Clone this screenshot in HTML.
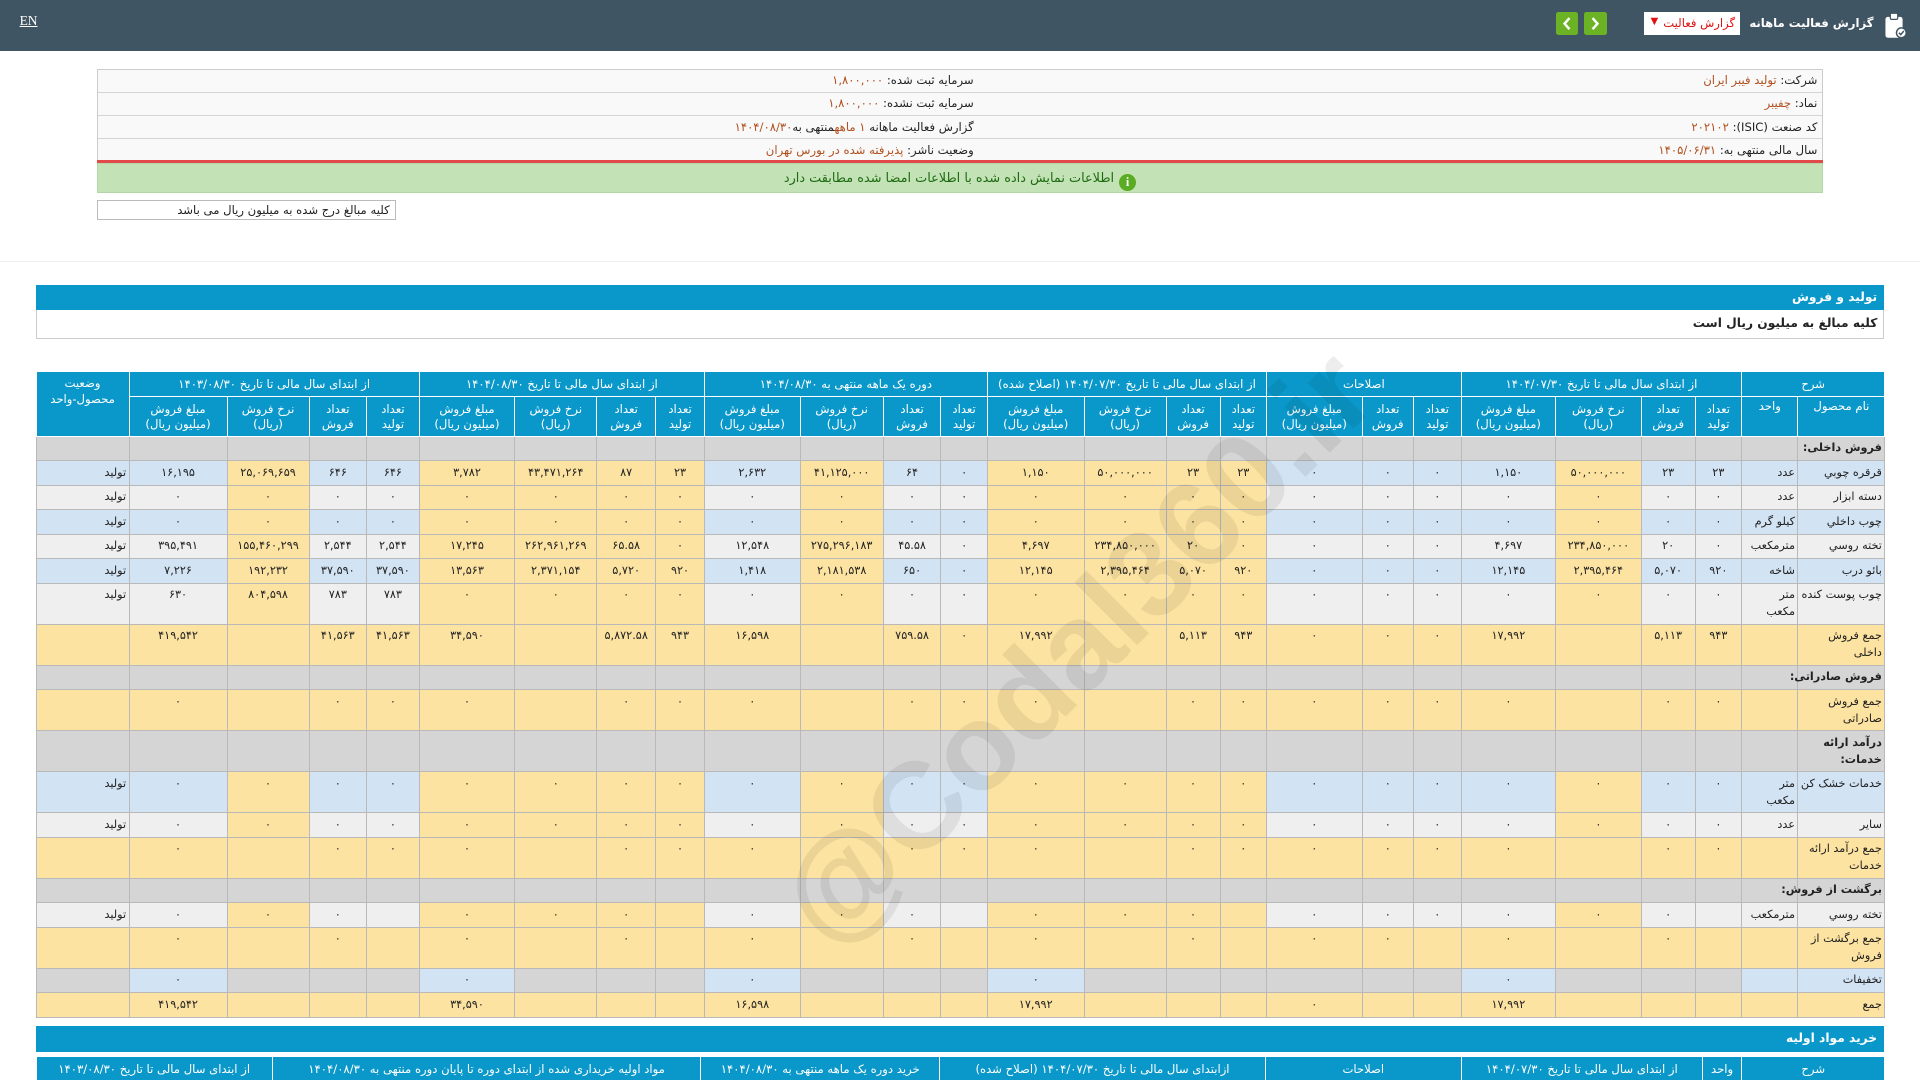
<!DOCTYPE html>
<html lang="fa"><head><meta charset="utf-8">
<style>
html{zoom:1.22449}
*{box-sizing:border-box;margin:0;padding:0}
body{width:1568px;height:882px;overflow:hidden;background:#fff;font-family:"DejaVu Sans",sans-serif;position:relative;color:#222}
.nav{position:absolute;left:0;top:0;width:1568px;height:42px;background:#3f5563}
.en{position:absolute;left:16px;top:11px;color:#fff;font-family:"Liberation Serif",serif;font-size:11px;text-decoration:underline}
.title{position:absolute;right:38px;top:13px;color:#fff;font-weight:bold;font-size:9.5px;direction:rtl;white-space:nowrap}
.clip{position:absolute;right:10px;top:10px}
.sel{position:absolute;left:1343px;top:10px;width:78px;height:19px;background:#fff;color:#e01010;font-size:9.5px;direction:rtl;padding:3px 4px 0 0;white-space:nowrap}
.sel span{position:absolute;left:5px;top:3px;font-size:8px}
.gbtn{position:absolute;top:10px;width:18px;height:19px;background:#6bb324;border-radius:2px}
.info{position:absolute;left:79px;top:56px;width:1410px;border:1px solid #ccc;border-bottom:none;background:#f9f9f9;direction:rtl;font-size:9.5px}
.info div{height:19px;border-bottom:1px solid #d5d5d5;position:relative;padding:3px 4px 0 0}
.info .l{position:absolute;right:693px;top:3px}
.v{color:#b0501e}
.red{position:absolute;left:79px;top:131px;width:1410px;height:2px;background:#e24a4a}
.green{position:absolute;left:79px;top:133px;width:1410px;height:25px;background:#c3e2b6;border:1px solid #b5d6a6;color:#1e6b12;font-size:10.5px;text-align:center;direction:rtl;padding-top:6px}
.green i{display:inline-block;width:14px;height:14px;border-radius:7px;background:#5aac23;color:#fff;font-style:normal;font-size:10px;font-weight:bold;line-height:14px;vertical-align:-3px;margin-left:4px;font-family:"Liberation Serif",serif}
.note{position:absolute;left:79px;top:163px;width:244px;height:17px;border:1px solid #bbb;font-size:9.5px;direction:rtl;padding:2px 4px 0 0}
.hr{position:absolute;left:0;top:213px;width:1568px;height:1px;background:#eee}
.bar{position:absolute;left:29px;width:1510px;background:#0a98ca;color:#fff;font-weight:bold;font-size:10px;direction:rtl;padding:4px 6px 0 0}
.sub{position:absolute;left:29px;top:253px;width:1510px;height:24px;border:1px solid #ccc;border-top:none;font-weight:bold;font-size:10px;direction:rtl;padding:5px 5px 0 0}
table{position:absolute;left:29px;border-collapse:collapse;table-layout:fixed;direction:rtl;font-size:9.2px}
td,th{border:1px solid #b9b9b9;height:20px;padding:2px 3px 0;vertical-align:top;text-align:center;overflow:hidden;white-space:nowrap;line-height:14px}
th{background:#0a98ca;color:#fff;font-weight:normal;border-color:#fff;border-width:1px;vertical-align:middle;line-height:13px;font-size:9.5px}
th.h1{height:19px}
th.h2{height:33px}
td.n{text-align:right;white-space:nowrap;overflow:visible;padding-right:2px}
tr.d td{height:33.5px}
.b{background:#d2e3f4}.g{background:#efefef}.y{background:#fde3a1}.s{background:#d5d5d5}
tr.s td.n{font-weight:bold}
.wm{position:absolute;left:560px;top:470px;transform:rotate(-45deg);font-size:100px;font-weight:bold;color:rgba(0,0,0,0.07);font-family:"Liberation Sans",sans-serif;white-space:nowrap}
</style></head><body>
<div class="nav">
<div class="en">EN</div>
<svg class="clip" width="20" height="22" viewBox="0 0 20 22"><rect x="2" y="4" width="14" height="17" rx="2" fill="#fff"/><rect x="6" y="1" width="6" height="5" rx="1" fill="#fff" stroke="#3f5563" stroke-width="1"/><circle cx="15" cy="17" r="4" fill="#fff" stroke="#3f5563" stroke-width="1.2"/><path d="M13 17l1.5 1.5 2.5-3" stroke="#3f5563" stroke-width="1.2" fill="none"/></svg>
<div class="title">گزارش فعالیت ماهانه</div>
<div class="sel">گزارش فعالیت<span>▼</span></div>
<div class="gbtn" style="left:1271px"><svg width="18" height="19"><path d="M11 5l-4 4.5 4 4.5" stroke="#fff" stroke-width="2" fill="none"/></svg></div>
<div class="gbtn" style="left:1294px"><svg width="18" height="19"><path d="M7 5l4 4.5-4 4.5" stroke="#fff" stroke-width="2" fill="none"/></svg></div>
</div>
<div class="info">
<div>شرکت: <span class="v">تولید فیبر ایران</span><span class="l">سرمایه ثبت شده: <span class="v">۱,۸۰۰,۰۰۰</span></span></div>
<div>نماد: <span class="v">چفیبر</span><span class="l">سرمایه ثبت نشده: <span class="v">۱,۸۰۰,۰۰۰</span></span></div>
<div>کد صنعت (ISIC): <span class="v">۲۰۲۱۰۲</span><span class="l">گزارش فعالیت ماهانه <span class="v">۱ ماهه</span>منتهی به<span class="v">۱۴۰۴/۰۸/۳۰</span></span></div>
<div>سال مالی منتهی به: <span class="v">۱۴۰۵/۰۶/۳۱</span><span class="l">وضعیت ناشر: <span class="v">پذیرفته شده در بورس تهران</span></span></div>
</div>
<div class="red"></div>
<div class="green"><i>i</i>اطلاعات نمایش داده شده با اطلاعات امضا شده مطابقت دارد</div>
<div class="note">کلیه مبالغ درج شده به میلیون ریال می باشد</div>
<div class="hr"></div>
<div class="bar" style="top:233px;height:20px">تولید و فروش</div>
<div class="sub">کلیه مبالغ به میلیون ریال است</div>

<table style="top:303px;width:1510px">
<colgroup><col style="width:71px"><col style="width:46px">
<col style="width:38px"><col style="width:44px"><col style="width:70px"><col style="width:77px">
<col style="width:39px"><col style="width:42px"><col style="width:78px">
<col style="width:38px"><col style="width:44px"><col style="width:67px"><col style="width:79px">
<col style="width:38px"><col style="width:47px"><col style="width:68px"><col style="width:78px">
<col style="width:40px"><col style="width:48px"><col style="width:67px"><col style="width:78px">
<col style="width:43px"><col style="width:47px"><col style="width:67px"><col style="width:80px">
<col style="width:76px"></colgroup>
<tr><th class="h1" colspan="2">شرح</th><th colspan="4">از ابتدای سال مالی تا تاریخ ۱۴۰۴/۰۷/۳۰</th><th colspan="3">اصلاحات</th><th colspan="4">از ابتدای سال مالی تا تاریخ ۱۴۰۴/۰۷/۳۰ (اصلاح شده)</th><th colspan="4">دوره یک ماهه منتهی به ۱۴۰۴/۰۸/۳۰</th><th colspan="4">از ابتدای سال مالی تا تاریخ ۱۴۰۴/۰۸/۳۰</th><th colspan="4">از ابتدای سال مالی تا تاریخ ۱۴۰۳/۰۸/۳۰</th><th rowspan="2" style="vertical-align:top;padding-top:3px">وضعیت<br>محصول-واحد</th></tr>
<tr><th class="h2" style="vertical-align:top">نام محصول</th><th style="vertical-align:top">واحد</th>
<th>تعداد<br>تولید</th><th>تعداد<br>فروش</th><th>نرخ فروش<br>(ریال)</th><th>مبلغ فروش<br>(میلیون ریال)</th>
<th>تعداد<br>تولید</th><th>تعداد<br>فروش</th><th>مبلغ فروش<br>(میلیون ریال)</th>
<th>تعداد<br>تولید</th><th>تعداد<br>فروش</th><th>نرخ فروش<br>(ریال)</th><th>مبلغ فروش<br>(میلیون ریال)</th>
<th>تعداد<br>تولید</th><th>تعداد<br>فروش</th><th>نرخ فروش<br>(ریال)</th><th>مبلغ فروش<br>(میلیون ریال)</th>
<th>تعداد<br>تولید</th><th>تعداد<br>فروش</th><th>نرخ فروش<br>(ریال)</th><th>مبلغ فروش<br>(میلیون ریال)</th>
<th>تعداد<br>تولید</th><th>تعداد<br>فروش</th><th>نرخ فروش<br>(ریال)</th><th>مبلغ فروش<br>(میلیون ریال)</th></tr>

<tr class="s"><td class="n s">فروش داخلی:</td><td class="s"></td><td class="s"></td><td class="s"></td><td class="s"></td><td class="s"></td><td class="s"></td><td class="s"></td><td class="s"></td><td class="s"></td><td class="s"></td><td class="s"></td><td class="s"></td><td class="s"></td><td class="s"></td><td class="s"></td><td class="s"></td><td class="s"></td><td class="s"></td><td class="s"></td><td class="s"></td><td class="s"></td><td class="s"></td><td class="s"></td><td class="s"></td><td class="s"></td></tr>

<tr><td class="n b">قرقره چوبي</td><td class="n b">عدد</td>
<td class="b">۲۳</td><td class="b">۲۳</td><td class="y">۵۰,۰۰۰,۰۰۰</td><td class="b">۱,۱۵۰</td>
<td class="b">۰</td><td class="b">۰</td><td class="b">۰</td>
<td class="y">۲۳</td><td class="y">۲۳</td><td class="y">۵۰,۰۰۰,۰۰۰</td><td class="y">۱,۱۵۰</td>
<td class="b">۰</td><td class="b">۶۴</td><td class="y">۴۱,۱۲۵,۰۰۰</td><td class="b">۲,۶۳۲</td>
<td class="y">۲۳</td><td class="y">۸۷</td><td class="y">۴۳,۴۷۱,۲۶۴</td><td class="y">۳,۷۸۲</td>
<td class="b">۶۴۶</td><td class="b">۶۴۶</td><td class="y">۲۵,۰۶۹,۶۵۹</td><td class="b">۱۶,۱۹۵</td><td class="n b">تولید</td></tr>

<tr><td class="n g">دسته ابزار</td><td class="n g">عدد</td>
<td class="g">۰</td><td class="g">۰</td><td class="y">۰</td><td class="g">۰</td>
<td class="g">۰</td><td class="g">۰</td><td class="g">۰</td>
<td class="y">۰</td><td class="y">۰</td><td class="y">۰</td><td class="y">۰</td>
<td class="g">۰</td><td class="g">۰</td><td class="y">۰</td><td class="g">۰</td>
<td class="y">۰</td><td class="y">۰</td><td class="y">۰</td><td class="y">۰</td>
<td class="g">۰</td><td class="g">۰</td><td class="y">۰</td><td class="g">۰</td><td class="n g">تولید</td></tr>

<tr><td class="n b">چوب داخلي</td><td class="n b">کیلو گرم</td>
<td class="b">۰</td><td class="b">۰</td><td class="y">۰</td><td class="b">۰</td>
<td class="b">۰</td><td class="b">۰</td><td class="b">۰</td>
<td class="y">۰</td><td class="y">۰</td><td class="y">۰</td><td class="y">۰</td>
<td class="b">۰</td><td class="b">۰</td><td class="y">۰</td><td class="b">۰</td>
<td class="y">۰</td><td class="y">۰</td><td class="y">۰</td><td class="y">۰</td>
<td class="b">۰</td><td class="b">۰</td><td class="y">۰</td><td class="b">۰</td><td class="n b">تولید</td></tr>

<tr><td class="n g">تخته روسي</td><td class="n g">مترمکعب</td>
<td class="g">۰</td><td class="g">۲۰</td><td class="y">۲۳۴,۸۵۰,۰۰۰</td><td class="g">۴,۶۹۷</td>
<td class="g">۰</td><td class="g">۰</td><td class="g">۰</td>
<td class="y">۰</td><td class="y">۲۰</td><td class="y">۲۳۴,۸۵۰,۰۰۰</td><td class="y">۴,۶۹۷</td>
<td class="g">۰</td><td class="g">۴۵.۵۸</td><td class="y">۲۷۵,۲۹۶,۱۸۳</td><td class="g">۱۲,۵۴۸</td>
<td class="y">۰</td><td class="y">۶۵.۵۸</td><td class="y">۲۶۲,۹۶۱,۲۶۹</td><td class="y">۱۷,۲۴۵</td>
<td class="g">۲,۵۴۴</td><td class="g">۲,۵۴۴</td><td class="y">۱۵۵,۴۶۰,۲۹۹</td><td class="g">۳۹۵,۴۹۱</td><td class="n g">تولید</td></tr>

<tr><td class="n b">بائو درب</td><td class="n b">شاخه</td>
<td class="b">۹۲۰</td><td class="b">۵,۰۷۰</td><td class="y">۲,۳۹۵,۴۶۴</td><td class="b">۱۲,۱۴۵</td>
<td class="b">۰</td><td class="b">۰</td><td class="b">۰</td>
<td class="y">۹۲۰</td><td class="y">۵,۰۷۰</td><td class="y">۲,۳۹۵,۴۶۴</td><td class="y">۱۲,۱۴۵</td>
<td class="b">۰</td><td class="b">۶۵۰</td><td class="y">۲,۱۸۱,۵۳۸</td><td class="b">۱,۴۱۸</td>
<td class="y">۹۲۰</td><td class="y">۵,۷۲۰</td><td class="y">۲,۳۷۱,۱۵۴</td><td class="y">۱۳,۵۶۳</td>
<td class="b">۳۷,۵۹۰</td><td class="b">۳۷,۵۹۰</td><td class="y">۱۹۲,۲۳۲</td><td class="b">۷,۲۲۶</td><td class="n b">تولید</td></tr>

<tr class="d"><td class="n g">چوب پوست کنده</td><td class="n g">متر<br>مکعب</td>
<td class="g">۰</td><td class="g">۰</td><td class="y">۰</td><td class="g">۰</td>
<td class="g">۰</td><td class="g">۰</td><td class="g">۰</td>
<td class="y">۰</td><td class="y">۰</td><td class="y">۰</td><td class="y">۰</td>
<td class="g">۰</td><td class="g">۰</td><td class="y">۰</td><td class="g">۰</td>
<td class="y">۰</td><td class="y">۰</td><td class="y">۰</td><td class="y">۰</td>
<td class="g">۷۸۳</td><td class="g">۷۸۳</td><td class="y">۸۰۴,۵۹۸</td><td class="g">۶۳۰</td><td class="n g">تولید</td></tr>

<tr class="d y"><td class="n">جمع فروش<br>داخلی</td><td></td>
<td>۹۴۳</td><td>۵,۱۱۳</td><td></td><td>۱۷,۹۹۲</td>
<td>۰</td><td>۰</td><td>۰</td>
<td>۹۴۳</td><td>۵,۱۱۳</td><td></td><td>۱۷,۹۹۲</td>
<td>۰</td><td>۷۵۹.۵۸</td><td></td><td>۱۶,۵۹۸</td>
<td>۹۴۳</td><td>۵,۸۷۲.۵۸</td><td></td><td>۳۴,۵۹۰</td>
<td>۴۱,۵۶۳</td><td>۴۱,۵۶۳</td><td></td><td>۴۱۹,۵۴۲</td><td></td></tr>

<tr class="s"><td class="n">فروش صادراتی:</td><td></td><td></td><td></td><td></td><td></td><td></td><td></td><td></td><td></td><td></td><td></td><td></td><td></td><td></td><td></td><td></td><td></td><td></td><td></td><td></td><td></td><td></td><td></td><td></td><td></td></tr>

<tr class="d y"><td class="n">جمع فروش<br>صادراتی</td><td></td>
<td>۰</td><td>۰</td><td></td><td>۰</td><td>۰</td><td>۰</td><td>۰</td>
<td>۰</td><td>۰</td><td></td><td>۰</td><td>۰</td><td>۰</td><td></td><td>۰</td>
<td>۰</td><td>۰</td><td></td><td>۰</td><td>۰</td><td>۰</td><td></td><td>۰</td><td></td></tr>

<tr class="d s"><td class="n">درآمد ارائه<br>خدمات:</td><td></td><td></td><td></td><td></td><td></td><td></td><td></td><td></td><td></td><td></td><td></td><td></td><td></td><td></td><td></td><td></td><td></td><td></td><td></td><td></td><td></td><td></td><td></td><td></td><td></td></tr>

<tr class="d"><td class="n b">خدمات خشک کن</td><td class="n b">متر<br>مکعب</td>
<td class="b">۰</td><td class="b">۰</td><td class="y">۰</td><td class="b">۰</td>
<td class="b">۰</td><td class="b">۰</td><td class="b">۰</td>
<td class="y">۰</td><td class="y">۰</td><td class="y">۰</td><td class="y">۰</td>
<td class="b">۰</td><td class="b">۰</td><td class="y">۰</td><td class="b">۰</td>
<td class="y">۰</td><td class="y">۰</td><td class="y">۰</td><td class="y">۰</td>
<td class="b">۰</td><td class="b">۰</td><td class="y">۰</td><td class="b">۰</td><td class="n b">تولید</td></tr>

<tr><td class="n g">سایر</td><td class="n g">عدد</td>
<td class="g">۰</td><td class="g">۰</td><td class="y">۰</td><td class="g">۰</td>
<td class="g">۰</td><td class="g">۰</td><td class="g">۰</td>
<td class="y">۰</td><td class="y">۰</td><td class="y">۰</td><td class="y">۰</td>
<td class="g">۰</td><td class="g">۰</td><td class="y">۰</td><td class="g">۰</td>
<td class="y">۰</td><td class="y">۰</td><td class="y">۰</td><td class="y">۰</td>
<td class="g">۰</td><td class="g">۰</td><td class="y">۰</td><td class="g">۰</td><td class="n g">تولید</td></tr>

<tr class="d y"><td class="n">جمع درآمد ارائه<br>خدمات</td><td></td>
<td>۰</td><td>۰</td><td></td><td>۰</td><td>۰</td><td>۰</td><td>۰</td>
<td>۰</td><td>۰</td><td></td><td>۰</td><td>۰</td><td>۰</td><td></td><td>۰</td>
<td>۰</td><td>۰</td><td></td><td>۰</td><td>۰</td><td>۰</td><td></td><td>۰</td><td></td></tr>

<tr class="s"><td class="n">برگشت از فروش:</td><td></td><td></td><td></td><td></td><td></td><td></td><td></td><td></td><td></td><td></td><td></td><td></td><td></td><td></td><td></td><td></td><td></td><td></td><td></td><td></td><td></td><td></td><td></td><td></td><td></td></tr>

<tr><td class="n g">تخته روسي</td><td class="n g">مترمکعب</td>
<td class="g"></td><td class="g">۰</td><td class="y">۰</td><td class="g">۰</td>
<td class="g">۰</td><td class="g">۰</td><td class="g">۰</td>
<td class="y"></td><td class="y">۰</td><td class="y">۰</td><td class="y">۰</td>
<td class="g"></td><td class="g">۰</td><td class="y">۰</td><td class="g">۰</td>
<td class="y"></td><td class="y">۰</td><td class="y">۰</td><td class="y">۰</td>
<td class="g"></td><td class="g">۰</td><td class="y">۰</td><td class="g">۰</td><td class="n g">تولید</td></tr>

<tr class="d y"><td class="n">جمع برگشت از<br>فروش</td><td></td>
<td></td><td>۰</td><td></td><td>۰</td><td></td><td>۰</td><td>۰</td>
<td></td><td>۰</td><td></td><td>۰</td><td></td><td>۰</td><td></td><td>۰</td>
<td></td><td>۰</td><td></td><td>۰</td><td></td><td>۰</td><td></td><td>۰</td><td></td></tr>

<tr class="s"><td class="n b" style="font-weight:normal">تخفیفات</td><td class="b"></td>
<td></td><td></td><td></td><td class="b">۰</td><td></td><td></td><td></td>
<td></td><td></td><td></td><td class="b">۰</td><td></td><td></td><td></td><td class="b">۰</td>
<td></td><td></td><td></td><td class="b">۰</td><td></td><td></td><td></td><td class="b">۰</td><td></td></tr>

<tr class="y"><td class="n">جمع</td><td></td>
<td></td><td></td><td></td><td>۱۷,۹۹۲</td><td></td><td></td><td>۰</td>
<td></td><td></td><td></td><td>۱۷,۹۹۲</td><td></td><td></td><td></td><td>۱۶,۵۹۸</td>
<td></td><td></td><td></td><td>۳۴,۵۹۰</td><td></td><td></td><td></td><td>۴۱۹,۵۴۲</td><td></td></tr>
</table>

<div class="bar" style="top:838px;height:21px">خرید مواد اولیه</div>
<table style="top:862px;width:1510px">
<colgroup><col style="width:117px"><col style="width:32px"><col style="width:197px"><col style="width:160px"><col style="width:266px"><col style="width:195px"><col style="width:350px"><col style="width:193px"></colgroup>
<tr><th class="h1">شرح</th><th>واحد</th><th>از ابتدای سال مالی تا تاریخ ۱۴۰۴/۰۷/۳۰</th><th>اصلاحات</th><th>ازابتدای سال مالی تا تاریخ ۱۴۰۴/۰۷/۳۰ (اصلاح شده)</th><th>خرید دوره یک ماهه منتهی به ۱۴۰۴/۰۸/۳۰</th><th>مواد اولیه خریداری شده از ابتدای دوره تا پایان دوره منتهی به ۱۴۰۴/۰۸/۳۰</th><th>از ابتدای سال مالی تا تاریخ ۱۴۰۳/۰۸/۳۰</th></tr>
</table>
<div class="wm">@Codal360.ir</div>
</body></html>
